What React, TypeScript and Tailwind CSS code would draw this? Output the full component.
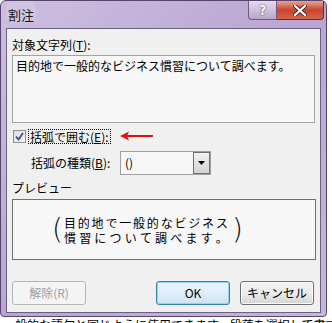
import React from "react";

const jp = { fontFamily: '"Noto Sans CJK JP", "Noto Sans", sans-serif' };
const paren = { fontFamily: '"DejaVu Sans", sans-serif' };

function CaptionButtons() {
  return (
    <div className="flex items-start">
      <div className="w-[29px] h-[19px] rounded-bl-[4px] border border-[#6b5c80] border-t-0 bg-gradient-to-b from-[#e4dcee] to-[#b7a6cc] flex items-center justify-center text-white text-[13px] font-bold [text-shadow:0_0_2px_#333]">
        ?
      </div>
      <div className="w-[47px] h-[19px] rounded-br-[4px] border border-[#6b2a22] border-t-0 border-l-0 bg-gradient-to-b from-[#e6a192] via-[#c7442e] to-[#d8624a] flex items-center justify-center">
        <svg width="14" height="11" viewBox="0 0 14 11">
          <path d="M2 1 L12 10 M12 1 L2 10" stroke="#3a2a2a" strokeWidth="4" strokeLinecap="square" />
          <path d="M2 1 L12 10 M12 1 L2 10" stroke="#fff" strokeWidth="2.2" strokeLinecap="square" />
        </svg>
      </div>
    </div>
  );
}

function Btn({ label, primary, disabled }: { label: string; primary?: boolean; disabled?: boolean }) {
  return (
    <div
      className={`w-[74px] h-[24px] rounded-[3px] border flex items-center justify-center text-[12px] ${
        disabled
          ? "border-[#b5b5b5] bg-[#f4f4f4] text-[#a0a0a0]"
          : primary
          ? "border-[#3c7fb1] bg-gradient-to-b from-[#eaf6fd] via-[#e0eefa] to-[#cfe2f0] text-black shadow-[inset_0_0_0_1px_#8fd4f7]"
          : "border-[#707070] bg-gradient-to-b from-[#f2f2f2] via-[#ebebeb] to-[#d5d5d5] text-black shadow-[inset_0_0_0_1px_#fcfcfc]"
      }`}
      style={jp}
    >
      {label}
    </div>
  );
}

const line1 = "目的地で一般的なビジネス".split("");
const line2 = "慣習について調べます。".split("");

export default function App() {
  return (
    <div className="w-[332px] h-[323px] bg-white overflow-hidden flex flex-col" style={jp}>
      <div className="flex">
        <div className="w-[327px] h-[317px] rounded-t-[6px] rounded-b-[4px] border border-[#54456a] bg-gradient-to-br from-[#cdbfe0] via-[#b9a5d3] to-[#c6b5dc] flex flex-col">
          {/* title bar */}
          <div className="h-[27px] flex justify-between pl-[5px] pr-[2px]">
            <div className="pt-[4px] text-[13px] text-[#1a1a1a] px-[2px] rounded-[8px] bg-[#d6cae6]/60 h-[22px]">割注</div>
            <CaptionButtons />
          </div>

          {/* client area */}
          <div className="mx-[5px] mb-[3px] flex-1 border border-[#6e6082] bg-[#f0f0f0] px-[5px] flex flex-col text-[12px] text-black">
            <div className="mt-[8px] h-[16px] leading-[16px]">
              対象文字列(<span className="underline">T</span>):
            </div>
            <div className="mt-[2px] h-[68px] border border-[#a3a3a3] bg-[#f7f7f7] px-[3px] pt-[2px] leading-[16px] w-[303px]">
              目的地で一般的なビジネス慣習について調べます。
            </div>

            <div className="mt-[5px] flex items-center h-[16px]">
              <div className="ml-[1px] w-[13px] h-[13px] border border-[#8e8f8f] bg-gradient-to-br from-[#dcdcdc] to-[#f6f6f6] flex items-center justify-center">
                <svg width="9" height="9" viewBox="0 0 9 9">
                  <path d="M1 4.5 L3.5 7.5 L8 1" stroke="#3a4f8c" strokeWidth="1.8" fill="none" />
                </svg>
              </div>
              <div className="ml-[2px] border border-dotted border-black px-[1px] h-[15px] leading-[13px]">
                括弧で囲む(<span className="underline">E</span>):
              </div>
              <svg className="ml-[9px]" width="34" height="10" viewBox="0 0 34 10">
                <path d="M4 5 H33" stroke="#e41010" strokeWidth="2" />
                <path d="M0 5 L9 0.5 L7 5 L9 9.5 Z" fill="#e41010" />
              </svg>
            </div>

            <div className="mt-[7px] flex items-center h-[24px]">
              <div className="ml-[19px] w-[89px]">
                括弧の種類(<span className="underline">B</span>):
              </div>
              <div className="w-[91px] h-[24px] border border-[#a0a0a0] bg-[#f6f6f6] flex items-center justify-between">
                <span className="ml-[4px]">()</span>
                <div className="w-[17px] h-[22px] border border-[#707070] bg-gradient-to-b from-[#f2f2f2] to-[#d4d4d4] flex items-center justify-center">
                  <svg width="7" height="4" viewBox="0 0 7 4">
                    <path d="M0 0 H7 L3.5 4 Z" fill="#000" />
                  </svg>
                </div>
              </div>
            </div>

            <div className="mt-[5px] h-[16px] leading-[16px]">プレビュー</div>
            <div className="mt-[3px] h-[61px] w-[304px] border border-[#707070] bg-[#f7f7f7] flex items-center">
              <div className="ml-[39px] flex items-center">
                <span className="text-[28px] leading-[30px] font-extralight text-[#111]" style={paren}>(</span>
                <div className="ml-[1px] w-[164px] flex flex-col text-[12px] leading-[15px]">
                  <div className="flex justify-between h-[15px]">
                    {line1.map((c, i) => (
                      <span key={i} className="leading-[15px]">{c}</span>
                    ))}
                  </div>
                  <div className="flex justify-between h-[15px]">
                    {line2.map((c, i) => (
                      <span key={i} className="leading-[15px]">{c}</span>
                    ))}
                  </div>
                </div>
                <span className="ml-[4px] text-[28px] leading-[30px] font-extralight text-[#111]" style={paren}>)</span>
              </div>
            </div>

            <div className="mt-[21px] flex">
              <Btn label="解除(R)" disabled />
              <div className="ml-[70px]">
                <Btn label="OK" primary />
              </div>
              <div className="ml-[10px]">
                <Btn label="キャンセル" />
              </div>
            </div>
          </div>
        </div>
      </div>
      <div className="mt-[1px] pl-[3px] text-[12px] leading-[14px] text-black whitespace-nowrap">
        一般的な語句と同じように使用できます。段落を選択して書式を
      </div>
    </div>
  );
}
